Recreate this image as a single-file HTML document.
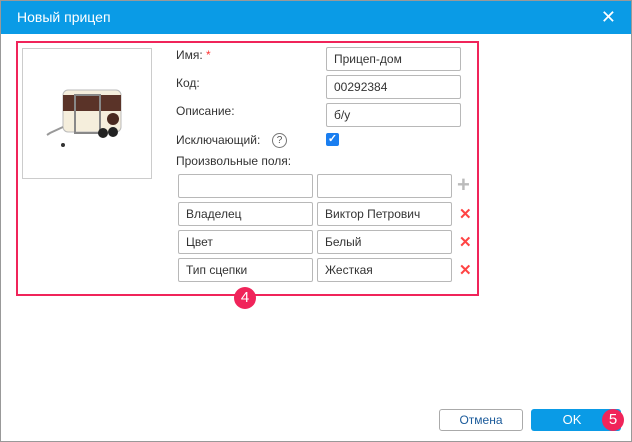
<!DOCTYPE html>
<html><head><meta charset="utf-8"><style>
body{margin:0;width:632px;height:442px;background:#fff;font-family:"Liberation Sans",sans-serif;font-size:12px;color:#333;position:relative;overflow:hidden}
.a{position:absolute}
.title{left:0;top:0;width:632px;height:34px;background:#0a9be6;color:#fff;font-size:14px;line-height:34px;text-indent:17px}
.frame{left:0;top:0;width:630px;height:440px;border:1px solid #999}
.in{position:absolute;height:22px;border:1px solid #b8b8b8;border-radius:2px;box-sizing:border-box;height:24px;line-height:22px;padding-left:7px;font-size:12px;color:#333;background:#fff}
.lbl{position:absolute;left:176px;font-size:12px}
.x{position:absolute;left:459px;color:#f44;font-size:15px;font-weight:bold}
.badge{position:absolute;width:22px;height:22px;border-radius:50%;background:#f0245a;color:#fff;font-size:15px;text-align:center;line-height:22px}
</style></head><body>
<div class="a title">Новый прицеп</div>
<div class="a" style="right:16px;top:7px;color:#fff;font-size:18px">✕</div>
<div class="a frame"></div>
<div class="a" style="left:16px;top:41px;width:459px;height:251px;border:2px solid #f0245a"></div>
<div class="a" style="left:22px;top:48px;width:128px;height:129px;border:1px solid #ccc"></div>
<svg class="a" style="left:45px;top:85px" width="85" height="70" viewBox="0 0 85 70">
<rect x="18" y="5" width="58" height="42" rx="5" fill="#f5eedc" stroke="#bbb"/>
<rect x="18" y="10" width="58" height="16" fill="#5a3328"/>
<rect x="30" y="10" width="25" height="38" fill="none" stroke="#888" stroke-width="2"/>
<circle cx="68" cy="34" r="6" fill="#4a2a20"/>
<circle cx="58" cy="48" r="5" fill="#222"/><circle cx="68" cy="47" r="5" fill="#222"/>
<path d="M18 42 L5 48 L2 50" stroke="#999" stroke-width="2" fill="none"/>
<circle cx="18" cy="60" r="2" fill="#333"/>
</svg>
<div class="lbl" style="top:48px">Имя: <span style="color:#f33">*</span></div>
<div class="lbl" style="top:76px">Код:</div>
<div class="lbl" style="top:104px">Описание:</div>
<div class="lbl" style="top:133px">Исключающий:</div>
<div class="a" style="left:272px;top:133px;width:13px;height:13px;border:1px solid #777;border-radius:50%;font-size:10px;text-align:center;line-height:13px;color:#555">?</div>
<div class="lbl" style="top:154px">Произвольные поля:</div>
<div class="in" style="left:326px;top:47px;width:135px">Прицеп-дом</div>
<div class="in" style="left:326px;top:75px;width:135px">00292384</div>
<div class="in" style="left:326px;top:103px;width:135px">б/у</div>
<div class="a" style="left:326px;top:133px;width:13px;height:13px;background:#1a7ef0;border-radius:2px;color:#fff;font-size:11px;line-height:13px;text-align:center;font-weight:bold">✓</div>
<div class="in" style="left:178px;top:174px;width:135px"></div>
<div class="in" style="left:317px;top:174px;width:135px"></div>
<div class="a" style="left:457px;top:172px;color:#bbb;font-size:22px;font-weight:bold">+</div>
<div class="in" style="left:178px;top:202px;width:135px">Владелец</div>
<div class="in" style="left:317px;top:202px;width:135px">Виктор Петрович</div>
<div class="x" style="top:205px">✕</div>
<div class="in" style="left:178px;top:230px;width:135px">Цвет</div>
<div class="in" style="left:317px;top:230px;width:135px">Белый</div>
<div class="x" style="top:233px">✕</div>
<div class="in" style="left:178px;top:258px;width:135px">Тип сцепки</div>
<div class="in" style="left:317px;top:258px;width:135px">Жесткая</div>
<div class="x" style="top:261px">✕</div>
<div class="badge" style="left:234px;top:287px">4</div>
<div class="a" style="left:439px;top:409px;width:84px;height:22px;border:1px solid #aaa;border-radius:3px;box-sizing:border-box;text-align:center;line-height:20px;color:#1a5a9a">Отмена</div>
<div class="a" style="left:531px;top:409px;width:90px;height:22px;background:#0a9be6;border-radius:3px;color:#fff;text-align:center;line-height:22px;font-size:13px;text-indent:-8px">OK</div>
<div class="badge" style="left:602px;top:409px">5</div>
</body></html>
